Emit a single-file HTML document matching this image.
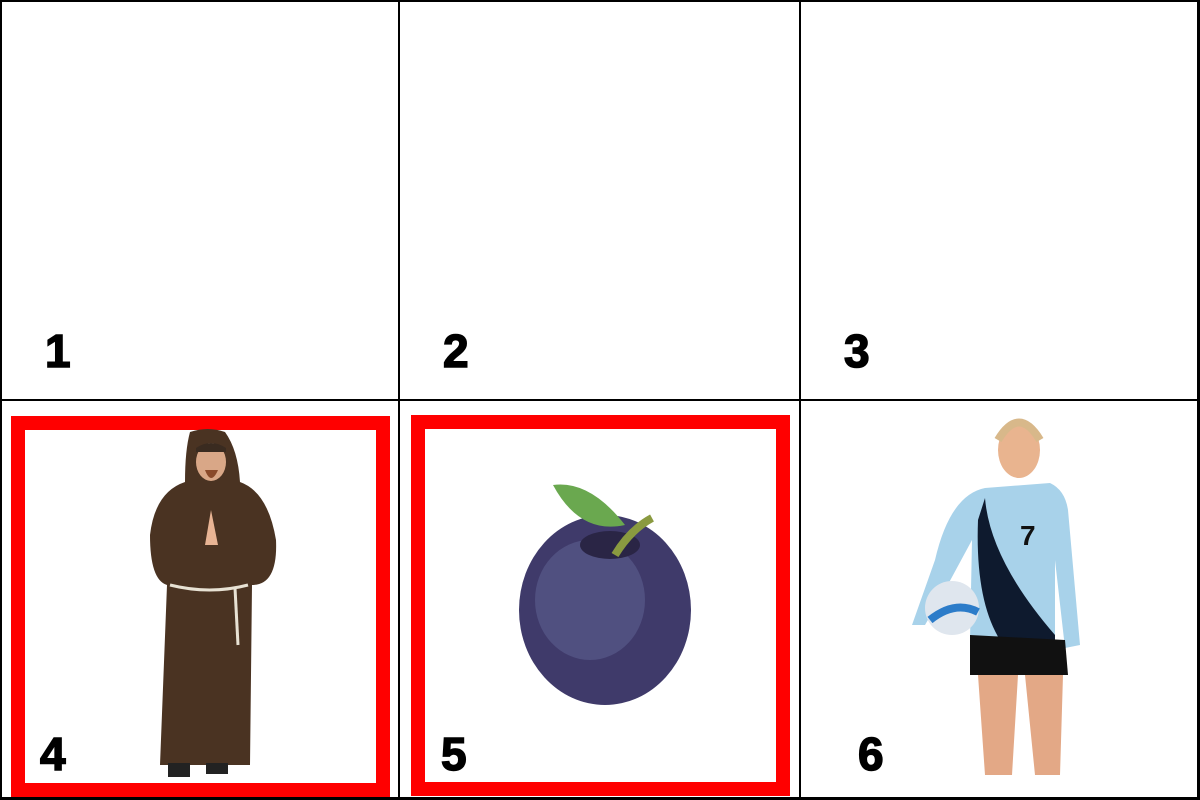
<!DOCTYPE html>
<html><head><meta charset="utf-8"><style>
html,body{margin:0;padding:0;background:#fff;width:1200px;height:800px;overflow:hidden}
.l{position:absolute;background:#000}
.n{position:absolute;font-family:"Liberation Sans",sans-serif;font-weight:900;font-size:46px;line-height:1;color:#000;-webkit-text-stroke:1.5px #000}
.r{position:absolute;border:14px solid #f00;box-sizing:border-box;background:#fff}
svg{position:absolute;left:0;top:0}
</style></head><body>
<div class="r" style="left:11px;top:416px;width:379px;height:381px"></div>
<div class="r" style="left:411px;top:415px;width:379px;height:381px"></div>
<svg width="1200" height="800" viewBox="0 0 1200 800">
<!-- monk -->
<path d="M190 432 Q208 426 225 432 Q238 450 240 482 Q268 492 276 540 Q278 585 252 585 L250 765 L160 765 L167 585 Q150 580 150 535 Q155 492 185 482 Q185 450 190 432Z" fill="#4a3322"/>
<ellipse cx="211" cy="462" rx="15" ry="19" fill="#d9a787"/>
<path d="M196 448 Q211 438 226 448 L226 452 L196 452Z" fill="#3a2b20"/>
<path d="M205 470 Q211 486 218 470Z" fill="#8a4a2a"/>
<path d="M205 545 L211 510 L218 545 Z" fill="#e8b494"/>
<path d="M170 585 Q210 595 248 585" stroke="#e8e2d4" stroke-width="3" fill="none"/>
<path d="M235 588 L238 645" stroke="#e8e2d4" stroke-width="3" fill="none"/>
<rect x="168" y="763" width="22" height="14" fill="#222"/><rect x="206" y="763" width="22" height="11" fill="#222"/>
<!-- plum -->
<ellipse cx="605" cy="610" rx="86" ry="95" fill="#3f3a6a"/>
<ellipse cx="590" cy="600" rx="55" ry="60" fill="#5b5f90" opacity=".6"/>
<ellipse cx="610" cy="545" rx="30" ry="14" fill="#2a2545"/>
<path d="M615 555 Q630 530 652 518" stroke="#8a9a40" stroke-width="8" fill="none"/>
<path d="M553 485 Q590 480 625 525 Q580 535 553 485Z" fill="#6aa84f"/>
<!-- player -->
<ellipse cx="1019" cy="450" rx="21" ry="28" fill="#e9b48f"/>
<path d="M998 440 Q1019 405 1040 440" stroke="#d8b88a" stroke-width="8" fill="none"/>
<path d="M985 488 L1050 483 Q1065 490 1068 510 L1080 645 L1065 648 L1055 560 L1055 640 L970 640 L972 540 L945 590 L925 625 L912 625 L935 560 Q950 495 985 488Z" fill="#a8d2ea"/>
<path d="M985 498 Q990 560 1055 635 L1055 648 L1000 640 Q975 600 978 520Z" fill="#0e1a2e"/>
<path d="M970 635 L1065 640 L1068 675 L970 675Z" fill="#111"/>
<path d="M978 675 L1018 675 L1012 775 L985 775Z M1025 675 L1063 675 L1060 775 L1035 775Z" fill="#e3a886"/>
<circle cx="952" cy="608" r="27" fill="#dfe6ee"/>
<path d="M930 620 Q955 600 978 612" stroke="#2c7cc9" stroke-width="8" fill="none"/>
<text x="1020" y="545" font-family="Liberation Sans,sans-serif" font-weight="bold" font-size="28" fill="#111">7</text>
</svg>
<div class="l" style="left:0;top:0;width:1200px;height:2px"></div>
<div class="l" style="left:0;top:399px;width:1200px;height:2px"></div>
<div class="l" style="left:0;top:797px;width:1200px;height:3px"></div>
<div class="l" style="left:0;top:0;width:2px;height:800px"></div>
<div class="l" style="left:398px;top:0;width:2px;height:800px"></div>
<div class="l" style="left:799px;top:0;width:2px;height:800px"></div>
<div class="l" style="left:1197px;top:0;width:3px;height:800px"></div>
<div class="n" style="left:45px;top:328px">1</div>
<div class="n" style="left:443px;top:328px">2</div>
<div class="n" style="left:844px;top:328px">3</div>
<div class="n" style="left:40px;top:731px">4</div>
<div class="n" style="left:441px;top:731px">5</div>
<div class="n" style="left:858px;top:731px">6</div>
</body></html>
